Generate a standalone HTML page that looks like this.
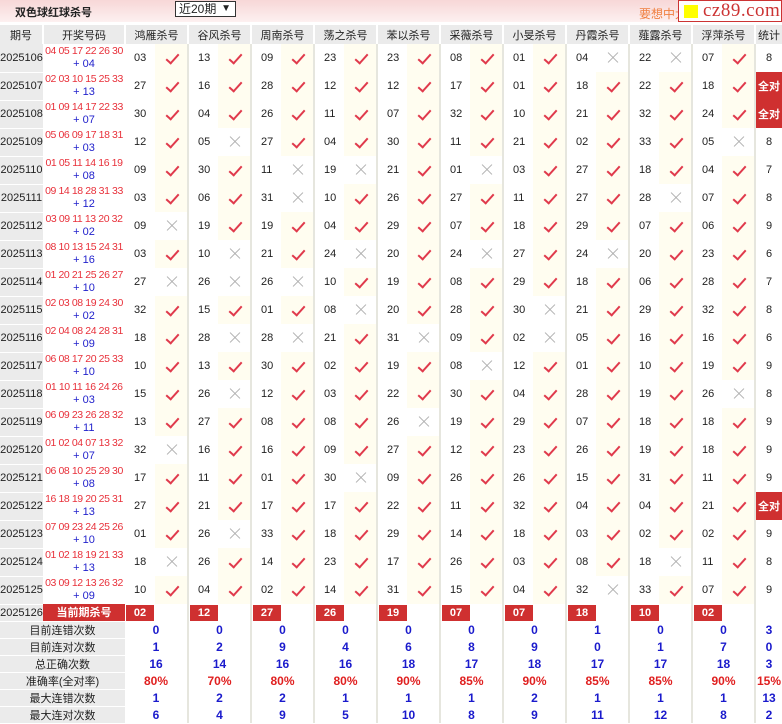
<!DOCTYPE html>
<html><head><meta charset="utf-8">
<style>
*{margin:0;padding:0;box-sizing:border-box}
body{width:782px;height:723px;overflow:hidden;background:#fff;font-family:"Liberation Sans","Noto Sans CJK SC",sans-serif;font-size:11px;color:#222;position:relative}
.top{position:absolute;left:0;top:0;width:782px;height:22px;background:linear-gradient(#f7d7d7,#fdf0f0);}
.top .t{position:absolute;left:15px;top:4px;font-weight:bold;font-size:11px}
.top .sel{position:absolute;left:175px;top:1px;width:61px;height:16px;border:1px solid #333;background:#fff;font-size:12px;line-height:14px;padding-left:3px}
.top .sel span{position:absolute;right:4px;top:0;font-size:10px}
.top .ad{position:absolute;left:639px;top:5px;color:#f08040;font-size:12px}
.logo{position:absolute;left:678px;top:0;width:104px;height:22px;background:#fff;border:1px solid #c33;color:#c33;font-family:"Liberation Serif",serif;font-size:19px;line-height:19px;padding-left:24px;letter-spacing:0.5px}
.logo:before{content:"";position:absolute;left:5px;top:4px;width:14px;height:13px;background:#ffff00}
table{position:absolute;left:0;top:25px;border-collapse:collapse;table-layout:fixed;width:782px}
td,th{padding:0;font-weight:normal;text-align:center;vertical-align:middle;white-space:nowrap;overflow:hidden}
tr.h td{height:19px;background:#ebebeb;border-right:2px solid #fff}
tr.d td{height:28px}
td.p{background:#ebebeb;border-bottom:1px solid #fff;color:#222}
td.k{line-height:13px;font-size:10.5px}
td.k i{font-style:normal;color:#e8303a;display:block;letter-spacing:-0.4px}
td.k b{font-weight:normal;color:#2222cc;display:block;font-size:11px}
td.v{text-align:left;padding-left:9px}
td.y,td.n{border-right:2px solid #e6e6de;position:relative}
td.y{background:#fffdf0}
td.y:after{content:"";display:block;position:absolute;left:14px;top:7px;width:5px;height:11px;border:solid #e03a4c;border-width:0 2px 2px 0;transform:rotate(42deg)}
td.n:before,td.n:after{content:"";position:absolute;left:10px;top:13px;width:14px;height:1px;background:#b0b0b0;transform:rotate(45deg)}
td.n:after{transform:rotate(-45deg)}
td.s{color:#222}
td.q{background:#cf3030;color:#fff;font-weight:bold;font-size:11px}
tr.c td{height:17px}
td.cr{background:#cf3030;color:#fff;font-weight:bold;border-bottom:1px solid #fff}
td.rb span{display:block;background:#cf3030;color:#fff;font-weight:bold;width:28px;height:16px;line-height:16px;margin-left:1px}
td.g{border-right:2px solid #e6e6de}
tr.st td{height:17px;color:#1a1acc;font-weight:bold;font-size:12px}
tr.st td.l{background:#ebebeb;color:#222;font-weight:normal;font-size:11px;border-bottom:1px solid #fff}
tr.st td.r{color:#e02020}
</style></head><body>
<div class="top"><div class="t">双色球红球杀号</div><div class="sel">近20期<span>▼</span></div><div class="ad">要想中大</div></div>
<div class="logo">cz89.com</div>
<table>
<colgroup><col style="width:43px"><col style="width:82px">
<col style="width:30px"><col style="width:33px"><col style="width:30px"><col style="width:33px"><col style="width:30px"><col style="width:33px"><col style="width:30px"><col style="width:33px"><col style="width:30px"><col style="width:33px"><col style="width:30px"><col style="width:33px"><col style="width:30px"><col style="width:33px"><col style="width:30px"><col style="width:33px"><col style="width:30px"><col style="width:33px"><col style="width:30px"><col style="width:33px">
<col style="width:27px"></colgroup>
<tr class="h"><td>期号</td><td>开奖号码</td><td colspan="2">鸿雁杀号</td><td colspan="2">谷风杀号</td><td colspan="2">周南杀号</td><td colspan="2">荡之杀号</td><td colspan="2">苯以杀号</td><td colspan="2">采薇杀号</td><td colspan="2">小旻杀号</td><td colspan="2">丹霞杀号</td><td colspan="2">薤露杀号</td><td colspan="2">浮萍杀号</td><td style="border:0">统计</td></tr>
<tr class="d"><td class="p">2025106</td><td class="k"><i>04 05 17 22 26 30</i><b>+ 04</b></td><td class="v">03</td><td class="y"></td><td class="v">13</td><td class="y"></td><td class="v">09</td><td class="y"></td><td class="v">23</td><td class="y"></td><td class="v">23</td><td class="y"></td><td class="v">08</td><td class="y"></td><td class="v">01</td><td class="y"></td><td class="v">04</td><td class="n"></td><td class="v">22</td><td class="n"></td><td class="v">07</td><td class="y"></td><td class="s">8</td></tr>
<tr class="d"><td class="p">2025107</td><td class="k"><i>02 03 10 15 25 33</i><b>+ 13</b></td><td class="v">27</td><td class="y"></td><td class="v">16</td><td class="y"></td><td class="v">28</td><td class="y"></td><td class="v">12</td><td class="y"></td><td class="v">12</td><td class="y"></td><td class="v">17</td><td class="y"></td><td class="v">01</td><td class="y"></td><td class="v">18</td><td class="y"></td><td class="v">22</td><td class="y"></td><td class="v">18</td><td class="y"></td><td class="q">全对</td></tr>
<tr class="d"><td class="p">2025108</td><td class="k"><i>01 09 14 17 22 33</i><b>+ 07</b></td><td class="v">30</td><td class="y"></td><td class="v">04</td><td class="y"></td><td class="v">26</td><td class="y"></td><td class="v">11</td><td class="y"></td><td class="v">07</td><td class="y"></td><td class="v">32</td><td class="y"></td><td class="v">10</td><td class="y"></td><td class="v">21</td><td class="y"></td><td class="v">32</td><td class="y"></td><td class="v">24</td><td class="y"></td><td class="q">全对</td></tr>
<tr class="d"><td class="p">2025109</td><td class="k"><i>05 06 09 17 18 31</i><b>+ 03</b></td><td class="v">12</td><td class="y"></td><td class="v">05</td><td class="n"></td><td class="v">27</td><td class="y"></td><td class="v">04</td><td class="y"></td><td class="v">30</td><td class="y"></td><td class="v">11</td><td class="y"></td><td class="v">21</td><td class="y"></td><td class="v">02</td><td class="y"></td><td class="v">33</td><td class="y"></td><td class="v">05</td><td class="n"></td><td class="s">8</td></tr>
<tr class="d"><td class="p">2025110</td><td class="k"><i>01 05 11 14 16 19</i><b>+ 08</b></td><td class="v">09</td><td class="y"></td><td class="v">30</td><td class="y"></td><td class="v">11</td><td class="n"></td><td class="v">19</td><td class="n"></td><td class="v">21</td><td class="y"></td><td class="v">01</td><td class="n"></td><td class="v">03</td><td class="y"></td><td class="v">27</td><td class="y"></td><td class="v">18</td><td class="y"></td><td class="v">04</td><td class="y"></td><td class="s">7</td></tr>
<tr class="d"><td class="p">2025111</td><td class="k"><i>09 14 18 28 31 33</i><b>+ 12</b></td><td class="v">03</td><td class="y"></td><td class="v">06</td><td class="y"></td><td class="v">31</td><td class="n"></td><td class="v">10</td><td class="y"></td><td class="v">26</td><td class="y"></td><td class="v">27</td><td class="y"></td><td class="v">11</td><td class="y"></td><td class="v">27</td><td class="y"></td><td class="v">28</td><td class="n"></td><td class="v">07</td><td class="y"></td><td class="s">8</td></tr>
<tr class="d"><td class="p">2025112</td><td class="k"><i>03 09 11 13 20 32</i><b>+ 02</b></td><td class="v">09</td><td class="n"></td><td class="v">19</td><td class="y"></td><td class="v">19</td><td class="y"></td><td class="v">04</td><td class="y"></td><td class="v">29</td><td class="y"></td><td class="v">07</td><td class="y"></td><td class="v">18</td><td class="y"></td><td class="v">29</td><td class="y"></td><td class="v">07</td><td class="y"></td><td class="v">06</td><td class="y"></td><td class="s">9</td></tr>
<tr class="d"><td class="p">2025113</td><td class="k"><i>08 10 13 15 24 31</i><b>+ 16</b></td><td class="v">03</td><td class="y"></td><td class="v">10</td><td class="n"></td><td class="v">21</td><td class="y"></td><td class="v">24</td><td class="n"></td><td class="v">20</td><td class="y"></td><td class="v">24</td><td class="n"></td><td class="v">27</td><td class="y"></td><td class="v">24</td><td class="n"></td><td class="v">20</td><td class="y"></td><td class="v">23</td><td class="y"></td><td class="s">6</td></tr>
<tr class="d"><td class="p">2025114</td><td class="k"><i>01 20 21 25 26 27</i><b>+ 10</b></td><td class="v">27</td><td class="n"></td><td class="v">26</td><td class="n"></td><td class="v">26</td><td class="n"></td><td class="v">10</td><td class="y"></td><td class="v">19</td><td class="y"></td><td class="v">08</td><td class="y"></td><td class="v">29</td><td class="y"></td><td class="v">18</td><td class="y"></td><td class="v">06</td><td class="y"></td><td class="v">28</td><td class="y"></td><td class="s">7</td></tr>
<tr class="d"><td class="p">2025115</td><td class="k"><i>02 03 08 19 24 30</i><b>+ 02</b></td><td class="v">32</td><td class="y"></td><td class="v">15</td><td class="y"></td><td class="v">01</td><td class="y"></td><td class="v">08</td><td class="n"></td><td class="v">20</td><td class="y"></td><td class="v">28</td><td class="y"></td><td class="v">30</td><td class="n"></td><td class="v">21</td><td class="y"></td><td class="v">29</td><td class="y"></td><td class="v">32</td><td class="y"></td><td class="s">8</td></tr>
<tr class="d"><td class="p">2025116</td><td class="k"><i>02 04 08 24 28 31</i><b>+ 09</b></td><td class="v">18</td><td class="y"></td><td class="v">28</td><td class="n"></td><td class="v">28</td><td class="n"></td><td class="v">21</td><td class="y"></td><td class="v">31</td><td class="n"></td><td class="v">09</td><td class="y"></td><td class="v">02</td><td class="n"></td><td class="v">05</td><td class="y"></td><td class="v">16</td><td class="y"></td><td class="v">16</td><td class="y"></td><td class="s">6</td></tr>
<tr class="d"><td class="p">2025117</td><td class="k"><i>06 08 17 20 25 33</i><b>+ 10</b></td><td class="v">10</td><td class="y"></td><td class="v">13</td><td class="y"></td><td class="v">30</td><td class="y"></td><td class="v">02</td><td class="y"></td><td class="v">19</td><td class="y"></td><td class="v">08</td><td class="n"></td><td class="v">12</td><td class="y"></td><td class="v">01</td><td class="y"></td><td class="v">10</td><td class="y"></td><td class="v">19</td><td class="y"></td><td class="s">9</td></tr>
<tr class="d"><td class="p">2025118</td><td class="k"><i>01 10 11 16 24 26</i><b>+ 03</b></td><td class="v">15</td><td class="y"></td><td class="v">26</td><td class="n"></td><td class="v">12</td><td class="y"></td><td class="v">03</td><td class="y"></td><td class="v">22</td><td class="y"></td><td class="v">30</td><td class="y"></td><td class="v">04</td><td class="y"></td><td class="v">28</td><td class="y"></td><td class="v">19</td><td class="y"></td><td class="v">26</td><td class="n"></td><td class="s">8</td></tr>
<tr class="d"><td class="p">2025119</td><td class="k"><i>06 09 23 26 28 32</i><b>+ 11</b></td><td class="v">13</td><td class="y"></td><td class="v">27</td><td class="y"></td><td class="v">08</td><td class="y"></td><td class="v">08</td><td class="y"></td><td class="v">26</td><td class="n"></td><td class="v">19</td><td class="y"></td><td class="v">29</td><td class="y"></td><td class="v">07</td><td class="y"></td><td class="v">18</td><td class="y"></td><td class="v">18</td><td class="y"></td><td class="s">9</td></tr>
<tr class="d"><td class="p">2025120</td><td class="k"><i>01 02 04 07 13 32</i><b>+ 07</b></td><td class="v">32</td><td class="n"></td><td class="v">16</td><td class="y"></td><td class="v">16</td><td class="y"></td><td class="v">09</td><td class="y"></td><td class="v">27</td><td class="y"></td><td class="v">12</td><td class="y"></td><td class="v">23</td><td class="y"></td><td class="v">26</td><td class="y"></td><td class="v">19</td><td class="y"></td><td class="v">18</td><td class="y"></td><td class="s">9</td></tr>
<tr class="d"><td class="p">2025121</td><td class="k"><i>06 08 10 25 29 30</i><b>+ 08</b></td><td class="v">17</td><td class="y"></td><td class="v">11</td><td class="y"></td><td class="v">01</td><td class="y"></td><td class="v">30</td><td class="n"></td><td class="v">09</td><td class="y"></td><td class="v">26</td><td class="y"></td><td class="v">26</td><td class="y"></td><td class="v">15</td><td class="y"></td><td class="v">31</td><td class="y"></td><td class="v">11</td><td class="y"></td><td class="s">9</td></tr>
<tr class="d"><td class="p">2025122</td><td class="k"><i>16 18 19 20 25 31</i><b>+ 13</b></td><td class="v">27</td><td class="y"></td><td class="v">21</td><td class="y"></td><td class="v">17</td><td class="y"></td><td class="v">17</td><td class="y"></td><td class="v">22</td><td class="y"></td><td class="v">11</td><td class="y"></td><td class="v">32</td><td class="y"></td><td class="v">04</td><td class="y"></td><td class="v">04</td><td class="y"></td><td class="v">21</td><td class="y"></td><td class="q">全对</td></tr>
<tr class="d"><td class="p">2025123</td><td class="k"><i>07 09 23 24 25 26</i><b>+ 10</b></td><td class="v">01</td><td class="y"></td><td class="v">26</td><td class="n"></td><td class="v">33</td><td class="y"></td><td class="v">18</td><td class="y"></td><td class="v">29</td><td class="y"></td><td class="v">14</td><td class="y"></td><td class="v">18</td><td class="y"></td><td class="v">03</td><td class="y"></td><td class="v">02</td><td class="y"></td><td class="v">02</td><td class="y"></td><td class="s">9</td></tr>
<tr class="d"><td class="p">2025124</td><td class="k"><i>01 02 18 19 21 33</i><b>+ 13</b></td><td class="v">18</td><td class="n"></td><td class="v">26</td><td class="y"></td><td class="v">14</td><td class="y"></td><td class="v">23</td><td class="y"></td><td class="v">17</td><td class="y"></td><td class="v">26</td><td class="y"></td><td class="v">03</td><td class="y"></td><td class="v">08</td><td class="y"></td><td class="v">18</td><td class="n"></td><td class="v">11</td><td class="y"></td><td class="s">8</td></tr>
<tr class="d"><td class="p">2025125</td><td class="k"><i>03 09 12 13 26 32</i><b>+ 09</b></td><td class="v">10</td><td class="y"></td><td class="v">04</td><td class="y"></td><td class="v">02</td><td class="y"></td><td class="v">14</td><td class="y"></td><td class="v">31</td><td class="y"></td><td class="v">15</td><td class="y"></td><td class="v">04</td><td class="y"></td><td class="v">32</td><td class="n"></td><td class="v">33</td><td class="y"></td><td class="v">07</td><td class="y"></td><td class="s">9</td></tr>
<tr class="c"><td class="p">2025126</td><td class="cr">当前期杀号</td><td class="rb"><span>02</span></td><td class="g"></td><td class="rb"><span>12</span></td><td class="g"></td><td class="rb"><span>27</span></td><td class="g"></td><td class="rb"><span>26</span></td><td class="g"></td><td class="rb"><span>19</span></td><td class="g"></td><td class="rb"><span>07</span></td><td class="g"></td><td class="rb"><span>07</span></td><td class="g"></td><td class="rb"><span>18</span></td><td class="g"></td><td class="rb"><span>10</span></td><td class="g"></td><td class="rb"><span>02</span></td><td class="g"></td><td></td></tr>
<tr class="st"><td class="l" colspan="2">目前连错次数</td><td colspan="2" class="g">0</td><td colspan="2" class="g">0</td><td colspan="2" class="g">0</td><td colspan="2" class="g">0</td><td colspan="2" class="g">0</td><td colspan="2" class="g">0</td><td colspan="2" class="g">0</td><td colspan="2" class="g">1</td><td colspan="2" class="g">0</td><td colspan="2" class="g">0</td><td>3</td></tr>
<tr class="st"><td class="l" colspan="2">目前连对次数</td><td colspan="2" class="g">1</td><td colspan="2" class="g">2</td><td colspan="2" class="g">9</td><td colspan="2" class="g">4</td><td colspan="2" class="g">6</td><td colspan="2" class="g">8</td><td colspan="2" class="g">9</td><td colspan="2" class="g">0</td><td colspan="2" class="g">1</td><td colspan="2" class="g">7</td><td>0</td></tr>
<tr class="st"><td class="l" colspan="2">总正确次数</td><td colspan="2" class="g">16</td><td colspan="2" class="g">14</td><td colspan="2" class="g">16</td><td colspan="2" class="g">16</td><td colspan="2" class="g">18</td><td colspan="2" class="g">17</td><td colspan="2" class="g">18</td><td colspan="2" class="g">17</td><td colspan="2" class="g">17</td><td colspan="2" class="g">18</td><td>3</td></tr>
<tr class="st"><td class="l" colspan="2">准确率(全对率)</td><td colspan="2" class="g r">80%</td><td colspan="2" class="g r">70%</td><td colspan="2" class="g r">80%</td><td colspan="2" class="g r">80%</td><td colspan="2" class="g r">90%</td><td colspan="2" class="g r">85%</td><td colspan="2" class="g r">90%</td><td colspan="2" class="g r">85%</td><td colspan="2" class="g r">85%</td><td colspan="2" class="g r">90%</td><td class="r">15%</td></tr>
<tr class="st"><td class="l" colspan="2">最大连错次数</td><td colspan="2" class="g">1</td><td colspan="2" class="g">2</td><td colspan="2" class="g">2</td><td colspan="2" class="g">1</td><td colspan="2" class="g">1</td><td colspan="2" class="g">1</td><td colspan="2" class="g">2</td><td colspan="2" class="g">1</td><td colspan="2" class="g">1</td><td colspan="2" class="g">1</td><td>13</td></tr>
<tr class="st"><td class="l" colspan="2">最大连对次数</td><td colspan="2" class="g">6</td><td colspan="2" class="g">4</td><td colspan="2" class="g">9</td><td colspan="2" class="g">5</td><td colspan="2" class="g">10</td><td colspan="2" class="g">8</td><td colspan="2" class="g">9</td><td colspan="2" class="g">11</td><td colspan="2" class="g">12</td><td colspan="2" class="g">8</td><td>2</td></tr>
</table>
</body></html>
